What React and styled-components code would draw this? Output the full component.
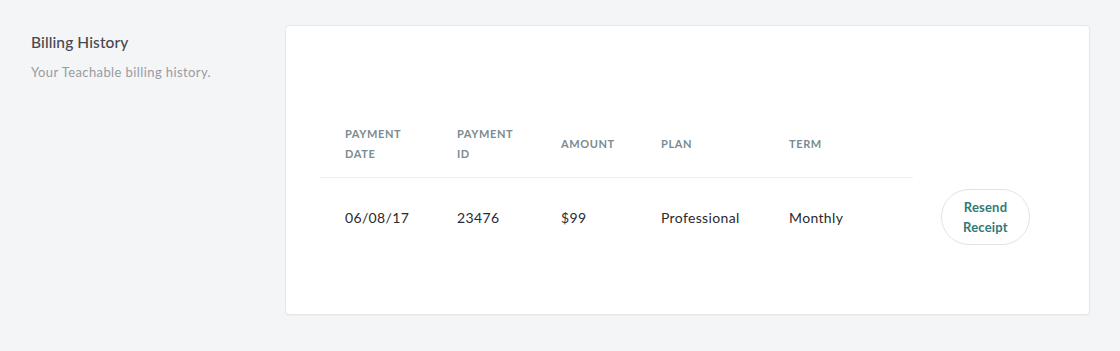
import React from 'react';
import styled, { createGlobalStyle } from 'styled-components';

const GlobalStyle = createGlobalStyle`
  html, body {
    margin: 0;
    padding: 0;
    background: #f4f5f7;
  }
  body {
    font-family: Lato, "Open Sans", sans-serif;
    -webkit-font-smoothing: antialiased;
  }
`;

const Page = styled('div')`
  display: flex;
  width: 1120px;
  height: 351px;
  box-sizing: border-box;
  padding: 25px 30px 0 31px;
`;

const Intro = styled('div')`
  width: 254px;
  flex-shrink: 0;
  padding-top: 8px;
  display: flex;
  flex-direction: column;
  gap: 13px;
`;

const IntroTitle = styled('h2')`
  margin: 0;
  font-size: 15.5px;
  line-height: 18px;
  font-weight: 500;
  letter-spacing: 0.1px;
  color: #48484f;
`;

const IntroText = styled('p')`
  margin: 0;
  font-size: 13px;
  line-height: 16px;
  letter-spacing: 0.4px;
  color: #989ba2;
`;

const Card = styled('section')`
  width: 805px;
  height: 290px;
  box-sizing: border-box;
  background: #ffffff;
  border: 1px solid #e4e6e9;
  border-radius: 4px;
  box-shadow: 0 1px 1px rgba(0, 0, 0, 0.03);
  padding: 98px 0 0 34px;
`;

const Table = styled('table')`
  border-collapse: collapse;
  table-layout: fixed;
`;

const HeadCell = styled('th')`
  width: ${p => p.$w}px;
  box-sizing: border-box;
  padding: 0 10px 13px 25px;
  text-align: left;
  vertical-align: middle;
  font-size: 11px;
  line-height: 20px;
  font-weight: 700;
  letter-spacing: 0.6px;
  text-transform: uppercase;
  color: #7b8b90;
  border-bottom: ${p => (p.$plain ? 'none' : '1px solid #eceef0')};
`;

const Cell = styled('td')`
  padding: 13px 10px 0 25px;
  vertical-align: middle;
  font-size: 14px;
  line-height: 20px;
  letter-spacing: 0.35px;
  color: #2a2a30;
`;

const ActionCell = styled('td')`
  padding: 11px 0 0 28px;
  vertical-align: top;
`;

const ResendButton = styled('button')`
  width: 89px;
  height: 56px;
  box-sizing: border-box;
  background: #ffffff;
  border: 1px solid #e2e3e5;
  border-radius: 28px;
  font-family: Lato, "Open Sans", sans-serif;
  font-size: 13px;
  line-height: 20px;
  font-weight: 700;
  letter-spacing: 0.2px;
  color: #2f7b76;
  padding: 0;
  cursor: pointer;
`;

const columns = [
  { label: ['Payment', 'Date'], w: 112 },
  { label: ['Payment', 'ID'], w: 104 },
  { label: ['Amount'], w: 100 },
  { label: ['Plan'], w: 128 },
  { label: ['Term'], w: 149 },
];

const payments = [
  { date: '06/08/17', id: '23476', amount: '$99', plan: 'Professional', term: 'Monthly' },
];

const App = () => (
  <>
    <GlobalStyle />
    <Page>
      <Intro>
        <IntroTitle>Billing History</IntroTitle>
        <IntroText>Your Teachable billing history.</IntroText>
      </Intro>
      <Card>
        <Table>
          <thead>
            <tr>
              {columns.map(col => (
                <HeadCell key={col.label.join()} $w={col.w}>
                  {col.label.map((line, i) => (
                    <React.Fragment key={line}>
                      {i > 0 && <br />}
                      {line}
                    </React.Fragment>
                  ))}
                </HeadCell>
              ))}
              <HeadCell $w={130} $plain />
            </tr>
          </thead>
          <tbody>
            {payments.map(row => (
              <tr key={row.id}>
                <Cell>{row.date}</Cell>
                <Cell>{row.id}</Cell>
                <Cell>{row.amount}</Cell>
                <Cell>{row.plan}</Cell>
                <Cell>{row.term}</Cell>
                <ActionCell>
                  <ResendButton type="button">
                    Resend
                    <br />
                    Receipt
                  </ResendButton>
                </ActionCell>
              </tr>
            ))}
          </tbody>
        </Table>
      </Card>
    </Page>
  </>
);

export default App;
